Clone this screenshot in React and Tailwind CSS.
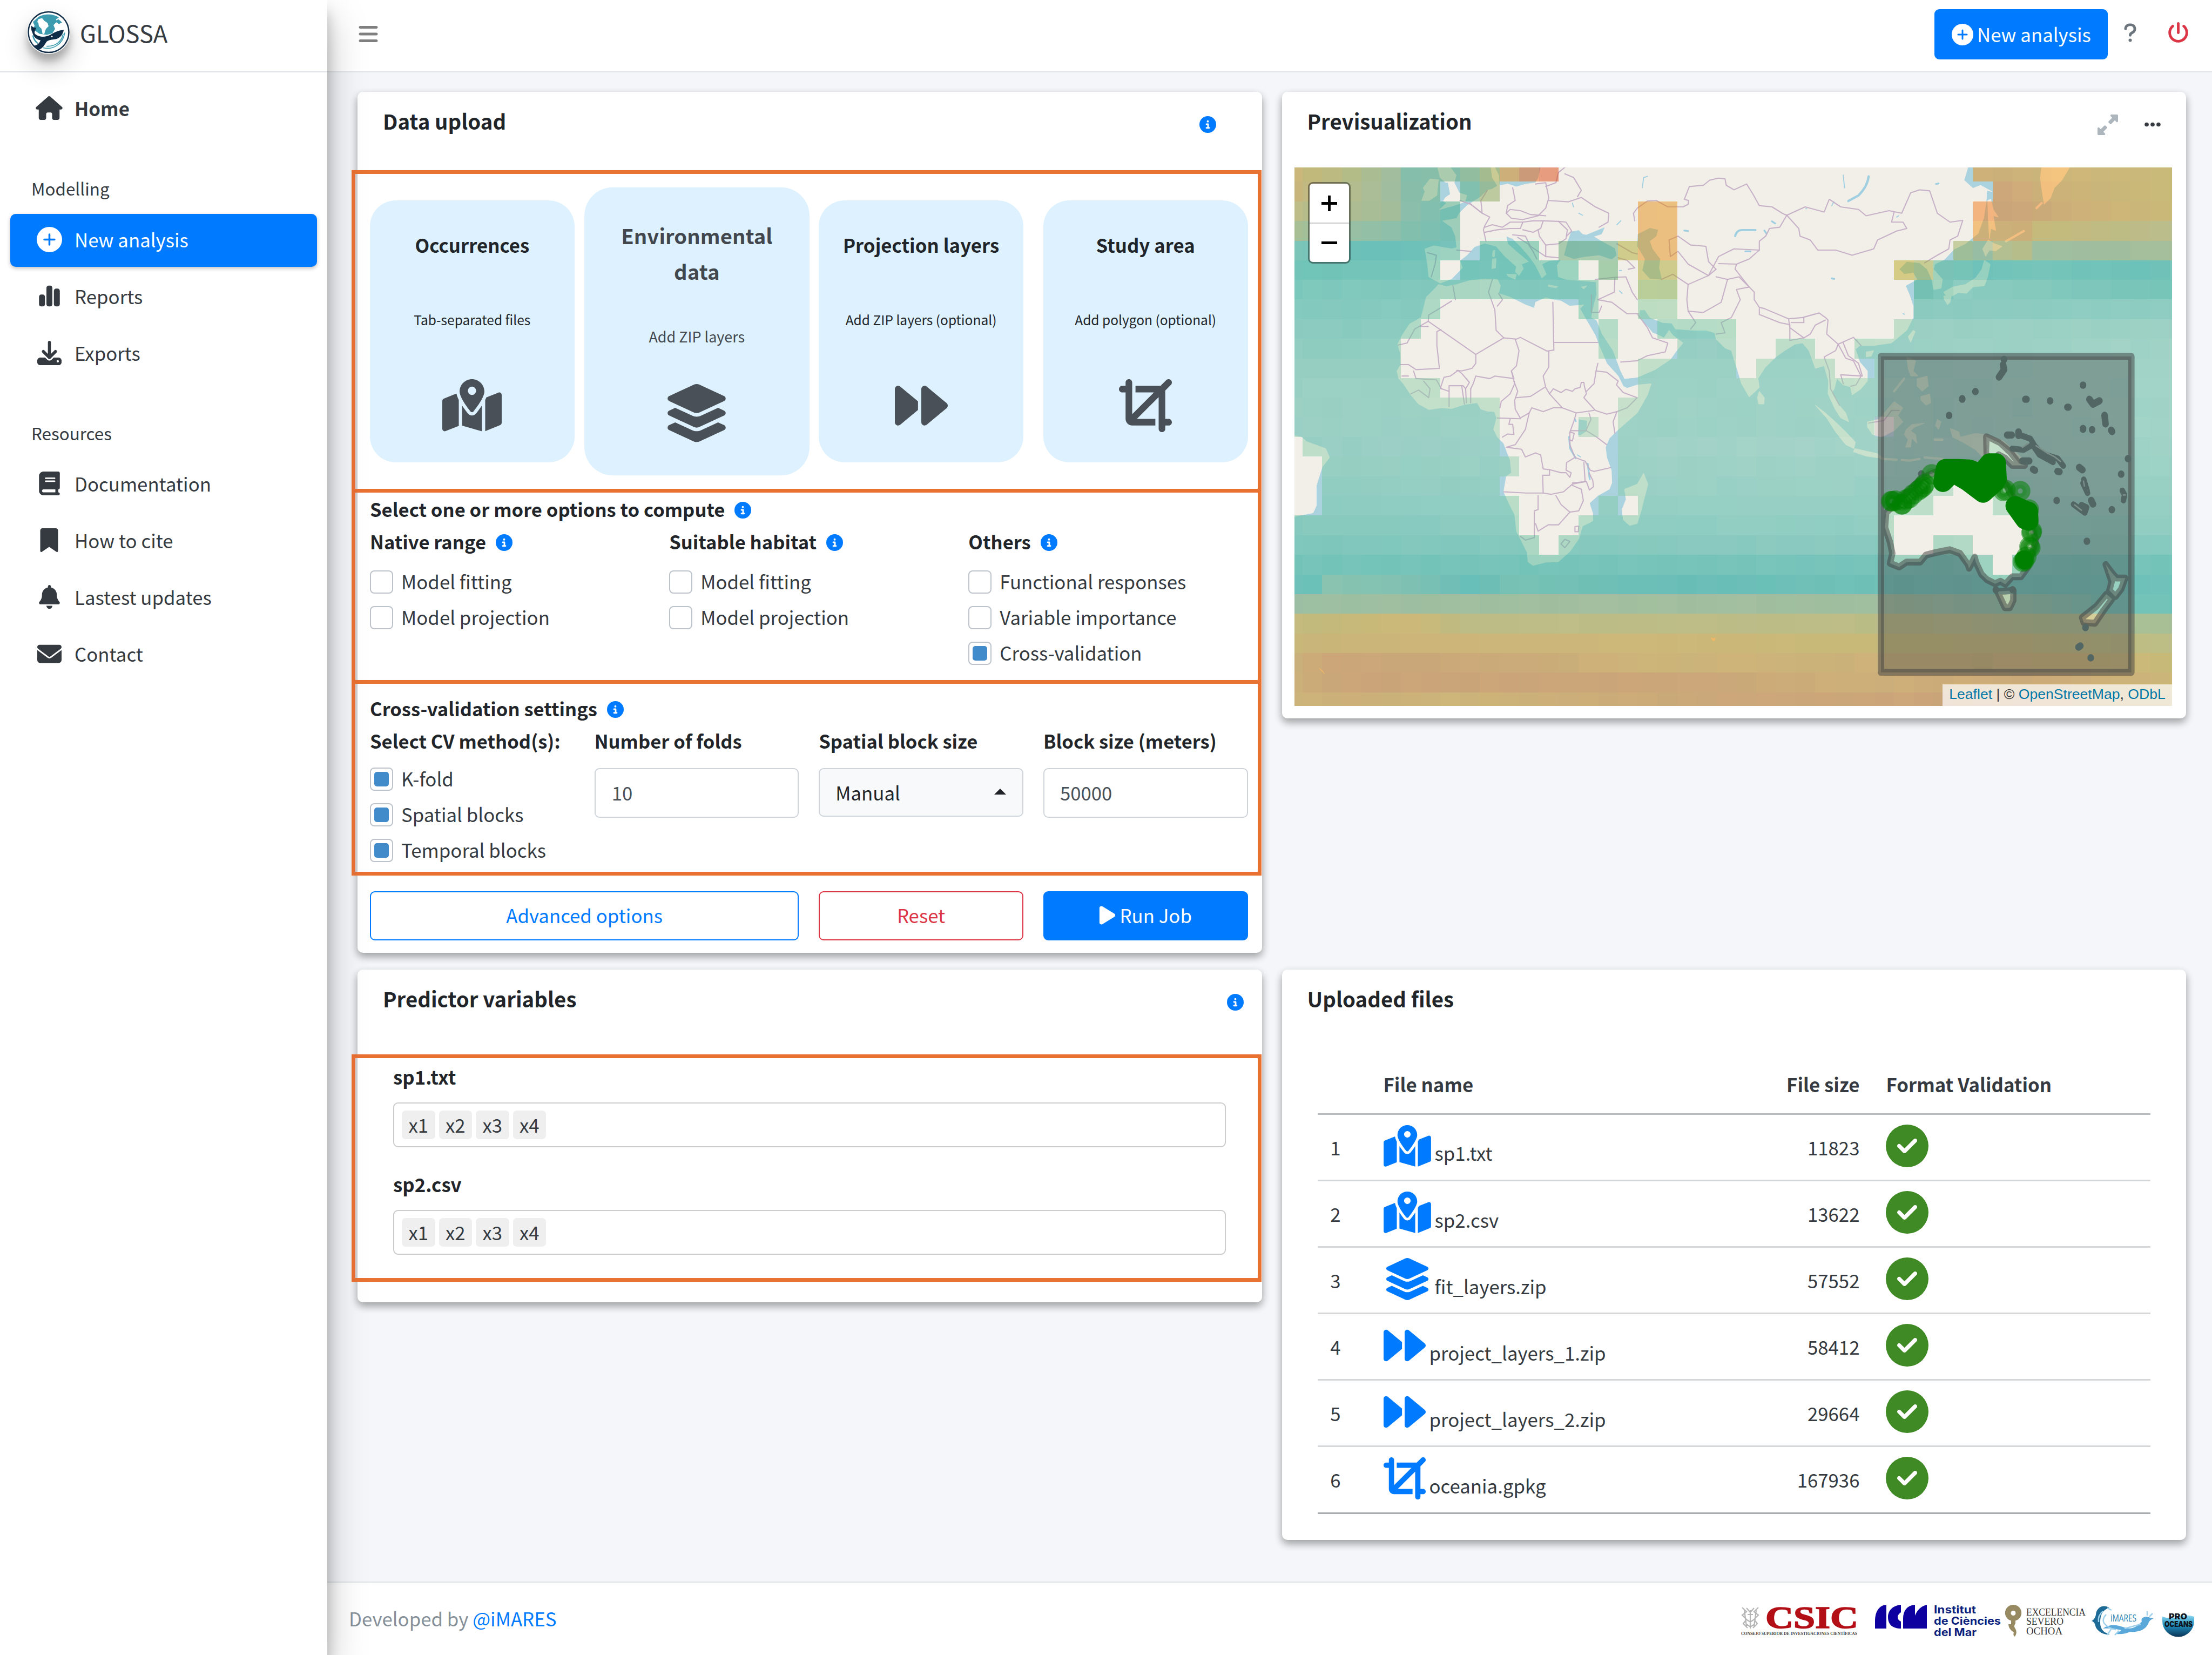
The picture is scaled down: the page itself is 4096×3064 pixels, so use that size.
import React from "react";
import {
  FaHouse, FaChartSimple, FaDownload, FaBook, FaBookmark, FaBell, FaEnvelope,
  FaCircleInfo, FaMapLocationDot, FaLayerGroup, FaForward, FaCrop, FaPlay,
  FaQuestion, FaPowerOff, FaCircleCheck, FaUpRightAndDownLeftFromCenter, FaEllipsis, FaBars,
} from "react-icons/fa6";

const CARD = "bg-white rounded-[10px] shadow-[0_7px_15px_rgba(0,0,0,0.16),0_7px_15px_rgba(0,0,0,0.23)]";

function PlusCircle({ className, plus = "#007bff" }) {
  return (
    <svg viewBox="0 0 100 100" className={className}>
      <circle cx="50" cy="50" r="50" fill="#fff" />
      <path d="M50 30v40M30 50h40" stroke={plus} strokeWidth="7.5" strokeLinecap="round" />
    </svg>
  );
}

function Info({ className = "" }) {
  return <FaCircleInfo className={"w-[31px] h-[31px] text-[#007bff] shrink-0 " + className} />;
}

/* ---------- Sidebar ---------- */

function GlossaLogo() {
  return (
    <svg viewBox="0 0 160 160" className="w-[80px] h-[81px] rounded-full shadow-[0_24px_46px_rgba(0,0,0,0.19),0_14px_14px_rgba(0,0,0,0.23)]">
      <circle cx="80" cy="80" r="80" fill="#fff" />
      <circle cx="80" cy="80" r="75" fill="#fff" stroke="#14304a" strokeWidth="5" />
      <path d="M42 24C60 12 98 10 118 26l-10 6 2 10-12 12 6 14-10 16-20 6-28-4-14-10-10-4 6-16-6-14z" fill="#3d9bb0" />
      <path d="M38 42l4-10 14-4 8 10 12 8 4 12-10 10-6 18-6 2-4-20-10-10-2-12z" fill="#fff" />
      <path d="M104 40l12-8 14 12-12 6z" fill="#3d9bb0" />
      <path d="M16 56c6 6 12 8 18 8l-4 10c-4 8-2 12 4 16 16 10 36 8 52 0 16-10 34-18 50-18-2 14-12 30-30 34-14 2-26 2-34 10-6 10-14 24-26 28-10 0-16-6-20-14 10 0 20-8 24-20-14-2-26-12-30-28-4-8-6-16-4-26z" fill="#0f2b45" />
      <path d="M134 76c-4 26-24 36-46 38-12 4-16 8-20 14 26 6 62-10 66-52z" fill="#fff" />
      <path d="M60 138c34 8 72-10 80-56M72 132c30 2 56-14 62-46" fill="none" stroke="#3d9bb0" strokeWidth="3.5" />
      <circle cx="92" cy="96" r="3" fill="#fff" />
      <path d="M22 92c2 14 8 22 18 30" fill="none" stroke="#3d9bb0" strokeWidth="5" />
    </svg>
  );
}

function NavItem({ icon: Icon, label, iconClass, className = "", bold }) {
  return (
    <div className={"h-[98px] mx-[19px] flex items-center rounded-[10px] " + className}>
      <div className="ml-[46px] w-[52px] flex justify-center shrink-0 -mt-[4px]">
        <Icon className={iconClass} />
      </div>
      <span className={"ml-[21px] -mt-[3px] whitespace-nowrap " + (bold ? "font-bold" : "")}>{label}</span>
    </div>
  );
}

function Sidebar() {
  return (
    <aside className="w-[606px] h-full shrink-0 bg-white relative z-20 text-[#343a40] shadow-[0_34px_68px_rgba(0,0,0,0.25),0_24px_24px_rgba(0,0,0,0.22)]">
      <div className="h-[134px] border-b-[2px] border-[#dee2e6] flex items-start">
        <div className="ml-[50px] mt-[19px]"><GlossaLogo /></div>
        <span className="ml-[18px] mt-[31px] text-[43.5px] leading-[60px] text-[#343a40]">GLOSSA</span>
      </div>
      <nav className="pt-[19px]">
        <NavItem icon={FaHouse} label="Home" bold iconClass="w-[50px] h-[44px]" />
        <div className="h-[145px] pl-[58px] flex items-end pb-[17px]">
          <span className="text-[31.4px] leading-[60px]">Modelling</span>
        </div>
        <NavItem icon={PlusCircle} label="New analysis" iconClass="w-[47px] h-[47px]" className="bg-[#007bff] text-white shadow-[0_3px_7px_rgba(0,0,0,0.24)]" />
        <div className="pt-[7px] flex flex-col gap-[7px]">
          <NavItem icon={FaChartSimple} label="Reports" iconClass="w-[39px] h-[44px]" />
          <NavItem icon={FaDownload} label="Exports" iconClass="w-[45px] h-[45px]" />
        </div>
        <div className="h-[144px] pl-[58px] flex items-end pb-[16px]">
          <span className="text-[31.4px] leading-[60px]">Resources</span>
        </div>
        <div className="flex flex-col gap-[7px]">
          <NavItem icon={FaBook} label="Documentation" iconClass="w-[39px] h-[44px]" />
          <NavItem icon={FaBookmark} label="How to cite" iconClass="w-[34px] h-[44px]" />
          <NavItem icon={FaBell} label="Lastest updates" iconClass="w-[39px] h-[44px]" />
          <NavItem icon={FaEnvelope} label="Contact" iconClass="w-[45px] h-[45px]" />
        </div>
      </nav>
    </aside>
  );
}

/* ---------- Top bar ---------- */

function TopBar() {
  return (
    <header className="h-[134px] shrink-0 bg-white border-b-[2px] border-[#dee2e6] flex items-start">
      <FaBars className="ml-[57px] mt-[43px] w-[38px] h-[40px] text-[#7f7f7f]" />
      <div className="ml-auto mt-[17px] w-[321px] h-[93px] rounded-[9px] bg-[#007bff] text-white flex items-center">
        <PlusCircle className="w-[40px] h-[40px] ml-[32px]" />
        <span className="ml-[7px] whitespace-nowrap">New analysis</span>
      </div>
      <FaQuestion className="ml-[29px] mt-[41px] w-[25px] h-[39px] text-[#6c757d]" />
      <FaPowerOff className="ml-[57px] mr-[43px] mt-[41px] w-[39px] h-[39px] text-[#dc3545]" />
    </header>
  );
}

/* ---------- Data upload ---------- */

function UploadTile({ title, sub, children, hovered }) {
  return (
    <div className={"h-[485px] rounded-[48px] bg-[#def1ff] flex flex-col items-center text-center pt-[52px] pb-[57px] " + (hovered ? "scale-110 text-[#41474d]" : "text-[#212529]")}>
      <div className={"font-bold px-[40px] " + (hovered ? "leading-[59.5px]" : "leading-[60px]")}>{title}</div>
      <div className="flex-1 flex items-center text-[24.5px]">{sub}</div>
      <div className="h-[97px] flex items-center text-[#495057]">{children}</div>
    </div>
  );
}

function Check({ label, on }) {
  return (
    <div className="h-[66px] flex items-center">
      <div className="w-[43px] h-[43px] rounded-[8px] border-[2.5px] border-[#bcc3ca] bg-white flex items-center justify-center shrink-0">
        {on && <div className="w-[27px] h-[27px] rounded-[5px] bg-[#428bca]" />}
      </div>
      <span className="ml-[15px] -mt-[2px] whitespace-nowrap text-[#343a40]">{label}</span>
    </div>
  );
}

function Label({ children, info }) {
  return (
    <div className="h-[60px] flex items-center font-bold text-[34.6px] whitespace-nowrap">
      {children}
      {info && <Info className="ml-[18px] mt-[3px]" />}
    </div>
  );
}

const FRAME = "-ml-[11px] mr-[1px] border-[7px] border-[#e97132] pl-[27px] pr-[18px]";

function DataUpload() {
  return (
    <section className={CARD + " h-[1594px]"}>
      <div className="h-[145px] pt-[23px] pl-[47px] pr-[85px] flex justify-between items-start">
        <h2 className="text-[38.4px] leading-[60px] font-bold">Data upload</h2>
        <Info className="mt-[22px]" />
      </div>
      <div className={FRAME + " h-[597px] pt-[49px]"}>
        <div className="grid grid-cols-4 gap-[37px]">
          <UploadTile title="Occurrences" sub="Tab-separated files"><FaMapLocationDot className="w-[110px] h-[98px]" /></UploadTile>
          <UploadTile title="Environmental data" sub="Add ZIP layers" hovered><FaLayerGroup className="w-[110px] h-[98px]" /></UploadTile>
          <UploadTile title="Projection layers" sub="Add ZIP layers (optional)"><FaForward className="w-[98px] h-[98px]" /></UploadTile>
          <UploadTile title="Study area" sub="Add polygon (optional)"><FaCrop className="w-[98px] h-[98px]" /></UploadTile>
        </div>
      </div>
      <div className={FRAME + " -mt-[7px] h-[361px] pt-[1px]"}>
        <Label info>Select one or more options to compute</Label>
        <div className="grid grid-cols-3 gap-[37px]">
          <div>
            <Label info>Native range</Label>
            <div className="mt-[11px]"><Check label="Model fitting" /><Check label="Model projection" /></div>
          </div>
          <div>
            <Label info>Suitable habitat</Label>
            <div className="mt-[11px]"><Check label="Model fitting" /><Check label="Model projection" /></div>
          </div>
          <div>
            <Label info>Others</Label>
            <div className="mt-[11px]"><Check label="Functional responses" /><Check label="Variable importance" /><Check label="Cross-validation" on /></div>
          </div>
        </div>
      </div>
      <div className={FRAME + " -mt-[7px] h-[362px] pt-[16px]"}>
        <Label info>Cross-validation settings</Label>
        <div className="grid grid-cols-4 gap-[37px]">
          <div>
            <Label>Select CV method(s):</Label>
            <div className="mt-[7px]"><Check label="K-fold" on /><Check label="Spatial blocks" on /><Check label="Temporal blocks" on /></div>
          </div>
          <div>
            <Label>Number of folds</Label>
            <div className="mt-[20px] h-[92px] border-[2.5px] border-[#ced4da] rounded-[9px] pl-[30px] pb-[2px] flex items-center text-[#495057]">10</div>
          </div>
          <div>
            <Label>Spatial block size</Label>
            <div className="mt-[20px] h-[90px] border-[2.5px] border-[#ced4da] bg-[#f8f9fa] rounded-[9px] pl-[29px] pr-[30px] flex items-center justify-between">
              Manual
              <div className="w-0 h-0 mt-[-4px] border-x-[11px] border-x-transparent border-b-[11px] border-b-[#212529]" />
            </div>
          </div>
          <div>
            <Label>Block size (meters)</Label>
            <div className="mt-[20px] h-[92px] border-[2.5px] border-[#ced4da] rounded-[9px] pl-[29px] pb-[2px] flex items-center text-[#495057]">50000</div>
          </div>
        </div>
      </div>
      <div className="mt-[29px] pl-[23px] pr-[26px] grid grid-cols-4 gap-[37px]">
        <div className="col-span-2 h-[91px] border-[2.5px] border-[#007bff] text-[#007bff] rounded-[9px] pb-[3px] flex items-center justify-center">Advanced options</div>
        <div className="h-[91px] border-[2.5px] border-[#dc3545] text-[#dc3545] rounded-[9px] pb-[3px] flex items-center justify-center">Reset</div>
        <div className="h-[91px] bg-[#007bff] text-white rounded-[9px] pb-[2px] flex items-center justify-center"><FaPlay className="w-[31px] h-[39px] mr-[7px] -mt-[1px]" />Run Job</div>
      </div>
    </section>
  );
}

/* ---------- Map ---------- */

// Suitability values, one entry per raster row: [column, sea colour] stops.
const ROWS = {
  "-1": [[-6, "c9b777"], [-3, "b5bc88"], [-1, "a0bd9d"], [0, "86bfab"], [2, "85bdaa"], [3, "93bda0"], [4, "a5bc90"], [5, "ccb070"], [6, "c99a76"], [7, "c08e74"], [29, "cdb174"], [33, "cdb672"], [39, "c9bb79"]],
  0: [[-6, "c9b67c"], [-3, "b4bd90"], [-1, "a0be9f"], [0, "8abfab"], [3, "80bfae"], [4, "98bc9c"], [30, "cda773"], [32, "cdb172"], [39, "c8bb7b"]],
  1: [[-6, "bebd87"], [-1, "a3bd9b"], [0, "8bbfac"], [2, "78bfb3"], [12, "c4b170"], [13, "c4b170"], [29, "cba577"], [31, "cca877"], [34, "cdb272"], [39, "cbbb7a"]],
  2: [[-6, "a8bf97"], [-1, "8fbfac"], [0, "84c0ae"], [2, "77bfb5"], [12, "c4b170"], [13, "c4b170"], [29, "cbb270"], [31, "ccaf72"], [32, "c5ba7c"], [39, "babe8e"]],
  3: [[-6, "7dc6b8"], [-3, "6cc1b9"], [-1, "6cc2ba"], [2, "76c3bb"], [6, "75c4b8"], [8, "84bca8"], [10, "80bdac"], [11, "a8bd86"], [12, "c4b170"], [13, "c4b170"], [28, "a0bf9a"], [29, "9abfa5"], [30, "b2be91"], [31, "b5bd8c"], [32, "9fbfa2"], [39, "a5bf9c"]],
  4: [[-6, "72c4b9"], [0, "78c5bb"], [9, "75c5ba"], [10, "82c0a6"], [12, "a9bd88"], [13, "a9bd88"], [25, "aebc80"], [26, "9fbd90"], [27, "7cc3b7"], [29, "6fc2ba"], [31, "78c5ba"], [37, "6ec2ba"], [39, "78c5bb"]],
  5: [[-6, "7cc8bc"], [0, "83c8bd"], [10, "84c8bd"], [12, "93bf95"], [13, "93bf95"], [26, "75c2b5"], [28, "8dccc0"], [33, "82c8bd"], [39, "76c4b9"]],
  6: [[-6, "85cabf"], [10, "88cabf"], [12, "96cebe"], [26, "8ccbc0"], [39, "8fcdc2"]],
  7: [[-6, "8bcbc0"], [12, "8ccdc1"], [26, "9bd0c4"], [39, "9cd1c5"]],
  8: [[-6, "90cdc1"], [20, "98cfc5"], [39, "a2d3c7"]],
  9: [[-6, "96cec2"], [39, "a2d4c8"]],
  10: [[-6, "9ad0c4"], [39, "a2d4c8"]],
  11: [[-6, "9bd0c4"], [39, "a2d4c8"]],
  12: [[-6, "9bd0c5"], [39, "a2d4c8"]],
  13: [[-6, "98cfc5"], [18, "a4d3c9"], [39, "a0d3c7"]],
  14: [[-6, "96cfc3"], [18, "a0d2c7"], [39, "9cd2c6"]],
  15: [[-6, "92cdc2"], [18, "9cd1c6"], [39, "9ad1c5"]],
  16: [[-6, "8dccc1"], [18, "98d0c5"], [39, "95cfc3"]],
  17: [[-6, "88cabf"], [18, "92cec3"], [39, "90cdc1"]],
  18: [[-6, "80c7bd"], [18, "8bcac0"], [39, "88cabf"]],
  19: [[-6, "76c4ba"], [18, "78c4bb"], [39, "76c4ba"]],
  20: [[-6, "6dc1b8"], [-5, "6dc1b8"], [-4, "8ac3b0"], [0, "80c2b3"], [2, "72bfb7"], [3, "68beb8"], [5, "78c2b5"], [10, "70c0b7"], [14, "6abfb8"], [22, "70c1b8"], [39, "70c2ba"]],
  21: [[-6, "9dbfa3"], [10, "a3bf9f"], [24, "a0bfa0"], [32, "8dc2ad"], [35, "78c4b8"], [39, "70c2ba"]],
  22: [[-6, "c3bb80"], [0, "cbb975"], [3, "bebd88"], [26, "bcbd88"], [39, "a8c099"]],
  23: [[-6, "c9b676"], [0, "cdb575"], [12, "cdb874"], [30, "c5bb7c"], [39, "bdbe88"]],
  24: [[-6, "cbb078"], [-4, "cba67a"], [6, "cbac76"], [12, "cdb572"], [26, "ccb274"], [34, "cdb670"], [39, "c5bb7a"]],
  25: [[-6, "ccb076"], [-3, "cba57a"], [14, "cba779"], [22, "cdb074"], [32, "ccab77"], [39, "cdb870"]],
  26: [[-6, "cdb474"], [-3, "cbaf76"], [2, "cdb572"], [16, "cca877"], [30, "cba579"], [39, "cdb472"]],
};

// Column ranges without a value.
const EMPTY = {
  "-1": [[8, 29]], 0: [[2, 3], [5, 30]], 1: [[3, 12], [14, 29]], 2: [[3, 12], [14, 29]],
  3: [[3, 4], [7, 8], [14, 28]], 4: [[2, 3], [9, 10], [11, 12], [14, 25]], 5: [[10, 12], [14, 26]],
  6: [[2, 9], [10, 12], [14, 26]], 7: [[1, 10], [11, 13], [17, 25]], 8: [[0, 10], [11, 14], [17, 19], [21, 23]],
  9: [[0, 12], [17, 18], [22, 24]], 10: [[2, 12]], 11: [[5, 11]], 12: [[5, 9], [10, 11], [24, 25]],
  13: [[-6, -5], [5, 11]], 14: [[-6, -4], [6, 11]], 15: [[-6, -4], [5, 11], [28, 30]],
  16: [[-6, -4], [6, 10], [11, 12], [27, 30]], 17: [[6, 9], [25, 32]], 18: [[7, 8], [25, 27], [29, 32]], 19: [[30, 31]],
};

const rgb = (h) => [0, 2, 4].map((i) => parseInt(h.slice(i, i + 2), 16));
const WATER = [170, 211, 223];
const ALPHA = 0.45;

function rasterCells() {
  const cells = [];
  for (let j = -1; j <= 26; j++) {
    const stops = ROWS[j];
    const skip = EMPTY[j] || [];
    for (let k = -6; k <= 39; k++) {
      if (skip.some(([a, b]) => k >= a && k < b)) continue;
      let i = 0;
      while (i < stops.length - 2 && stops[i + 1][0] <= k) i++;
      const [k0, c0] = stops[i];
      const [k1, c1] = stops[i + 1];
      const t = Math.max(0, Math.min(1, (k - k0) / (k1 - k0)));
      const a = rgb(c0), b = rgb(c1);
      const n = ((((k * 37 + j * 61 + k * j * 13) % 7) + 7) % 7 - 3) * 0.6;
      const col = a.map((v, q) => {
        const sea = v + (b[q] - v) * t + (q === 0 ? n : n * 0.3);
        return Math.max(0, Math.min(255, Math.round((sea - (1 - ALPHA) * WATER[q]) / ALPHA)));
      });
      const x = Math.round(71 + 77.55 * k), x2 = Math.round(71 + 77.55 * (k + 1));
      const y = j < 0 ? 0 : Math.round(56 + 77.2 * j), y2 = Math.round(56 + 77.2 * (j + 1));
      cells.push(<rect key={j + "_" + k} x={x} y={y} width={x2 - x} height={y2 - y} fill={"rgb(" + col.join(",") + ")"} />);
    }
  }
  return cells;
}

const LAND = [
  // Africa
  "218,460 205,475 170,510 158,560 150,590 105,615 75,660 58,695 68,730 70,775 55,800 62,830 80,850 110,895 140,930 180,952 230,945 270,948 320,932 370,925 385,950 410,958 438,960 447,985 435,1030 450,1060 475,1085 490,1125 500,1150 505,1200 485,1215 475,1275 495,1320 518,1365 525,1430 545,1470 568,1515 570,1550 590,1565 640,1552 690,1550 735,1510 770,1460 785,1410 825,1390 825,1360 812,1320 845,1290 890,1265 900,1240 898,1190 880,1140 875,1100 890,1065 920,1035 960,1000 1000,965 1040,895 1055,850 1000,855 960,868 945,860 925,820 880,770 850,700 835,660 800,600 775,555 790,540 735,545 700,525 670,520 640,512 600,530 595,553 560,540 530,525 500,510 455,495 462,465 450,440 400,438 340,445 290,460 250,468",
  // Eurasia
  "180,430 175,380 165,320 200,308 270,320 290,315 285,270 270,235 235,210 290,200 300,180 330,150 385,115 410,90 430,85 450,72 430,40 425,0 440,0 455,30 458,72 490,65 525,76 560,66 600,60 612,40 620,0 2300,0 2285,50 2320,82 2350,70 2395,95 2375,90 2372,135 2362,200 2340,260 2290,300 2245,322 2208,362 2170,380 2165,400 2200,440 2195,475 2165,480 2158,440 2140,400 2110,375 2060,370 2030,400 2050,420 2085,415 2100,440 2055,465 2070,500 2085,545 2085,590 2060,640 2000,690 1930,700 1875,700 1858,715 1875,765 1905,800 1905,840 1880,870 1845,895 1838,862 1810,855 1785,830 1775,870 1765,885 1790,930 1820,965 1832,1000 1800,985 1778,950 1750,890 1752,840 1735,780 1700,790 1690,760 1675,720 1650,690 1620,695 1580,720 1545,745 1500,790 1475,830 1480,865 1465,880 1440,902 1410,850 1395,800 1370,720 1345,710 1310,675 1305,650 1270,640 1220,640 1150,635 1135,612 1100,610 1050,590 1030,560 1010,560 1005,590 1040,625 1060,650 1085,660 1105,670 1125,640 1140,660 1180,690 1155,720 1130,755 1070,795 1000,825 950,830 935,800 905,720 862,655 840,600 820,590 825,560 840,500 838,450 780,445 720,440 690,430 685,385 700,362 655,366 625,380 642,420 625,435 600,385 575,350 540,310 510,280 485,270 490,300 530,335 572,370 545,380 552,398 535,425 520,410 525,390 480,350 445,310 400,298 360,312 330,345 303,366 312,395 270,438 225,455",
  // Great Britain, Ireland
  "215,0 265,0 288,30 280,60 300,100 330,110 322,135 285,148 222,166 250,140 232,128 265,105 258,70 225,40",
  "152,130 165,95 158,80 185,45 218,48 212,110 182,130",
  // Sardinia, Corsica, Sicily, Crete, Cyprus
  "430,360 445,358 443,395 428,398", "432,328 440,325 438,352 430,350", "487,420 525,420 520,440 492,428", "650,462 688,468 680,473 650,468", "780,470 802,465 790,478",
  // Madagascar, Sri Lanka
  "1025,1202 1042,1245 1015,1350 1000,1400 970,1408 945,1385 940,1345 956,1305 950,1265 1000,1245", "1480,880 1500,905 1498,930 1478,930 1472,905",
  // Japan, Sakhalin, Kamchatka, Taiwan, Hainan
  "2358,320 2380,285 2405,300 2435,310 2410,328 2385,325 2370,350", "2365,365 2388,380 2378,430 2365,465 2320,470 2295,495 2262,492 2240,505 2215,505 2205,490 2240,470 2290,460 2330,435 2355,400", "2205,505 2235,505 2230,530 2220,540 2208,520",
  "2378,130 2390,125 2400,165 2420,195 2400,190 2410,248 2390,240 2385,280 2380,200", "2590,0 2700,0 2670,50 2640,80 2625,120 2600,145 2590,80 2585,40",
  "2085,640 2093,645 2075,688 2065,665", "1900,725 1930,720 1920,742 1900,745",
  // Sumatra, Java, Borneo, Sulawesi, Philippines, New Guinea
  "1700,935 1740,965 1790,1010 1830,1050 1858,1080 1852,1105 1820,1090 1780,1040 1745,985", "1855,1105 1900,1115 1945,1125 1970,1145 1900,1135 1850,1118",
  "1905,1000 1950,990 1975,960 2010,920 2045,945 2025,975 2045,1000 2010,1035 1960,1060 1925,1050 1905,1020",
  "2058,1030 2080,1010 2130,1005 2090,1022 2075,1035 2095,1050 2100,1085 2080,1065 2075,1100 2055,1100 2065,1070 2050,1050",
  "2060,745 2095,760 2085,800 2105,820 2075,820 2065,790", "2115,900 2150,890 2155,925 2135,935 2115,915", "2100,830 2140,820 2145,860 2120,880 2100,860",
  "2230,1025 2265,1040 2270,1060 2330,1045 2370,1050 2440,1075 2500,1130 2540,1165 2480,1170 2430,1125 2360,1140 2330,1110 2280,1080 2240,1060", "2180,990 2195,1000 2185,1030 2172,1015",
  // South America
  "-348,1055 -320,1060 -300,1078 -225,1105 -210,1140 -239,1178 -262,1250 -262,1330 -275,1358 -348,1372",
];

const AUSTRALIA = "M245 740L300 690 400 600 500 560 600 560 690 600 686 432 740 455 790 492 830 540 855 548 800 548 770 520 740 505 760 600 790 660 860 740 905 850 870 960 838 1000 800 1000 770 1030 748 1018 725 1028 690 1012 665 990 640 940 635 920 610 965 605 950 570 905 525 890 460 902 420 912 395 940 335 940 302 960 262 945 272 905 262 860 240 800z";
const TASMANIA_NZ = "M735 1060L805 1055 805 1095 790 1125 768 1125zM1212 950L1240 985 1260 1005 1298 1005 1280 1050 1255 1080 1228 1055 1238 1020zM1215 1070L1240 1090 1200 1140 1165 1188 1115 1185 1108 1165 1170 1120z";

const BORDERS = [
  // Europe
  "303,130 345,145 390,180 420,195 400,230 395,245 405,290", "340,140 390,180 385,130 410,90", "510,80 520,130 490,150 485,180 505,200 550,205 610,190 640,160 652,120 640,60 600,65", "652,130 730,135 780,118 835,155 888,180 885,215 850,235", "640,75 680,60 690,20 715,0", "715,25 750,40 780,90 765,115", "400,235 430,225 470,235 500,215 550,215 540,240 500,240 450,245 400,255", "550,215 590,210 630,210 620,240 590,255 550,245", "630,210 690,212 725,245 720,280 690,300 640,305 615,270 610,245", "690,212 720,215 742,250 722,270", "510,265 560,270 580,310 610,330 640,350 690,355", "530,275 570,300 590,330 605,360", "640,305 640,350", "175,335 210,345 205,380 190,430", "290,325 345,330", "485,180 500,165 540,170 580,185 640,190",
  // Africa
  "270,525 230,550 180,580 178,605 365,735 475,670 445,640 440,560 415,490 430,440", "275,465 285,520", "455,495 470,520 450,545", "178,605 125,635 95,690 60,698", "148,625 178,625", "228,638 212,645 212,700 222,790 130,795 100,775 70,775", "365,735 365,770 350,790 310,800 290,798", "475,670 525,675 540,668 645,722 672,718 668,530", "520,675 535,720 525,780 505,800 515,830 440,820 420,830 365,820 355,850 345,870", "672,688 845,688", "652,722 652,785 630,820 640,865 655,890 705,945", "655,890 670,870 700,885 720,872 745,880 755,870 775,865 780,845 790,845 792,860 800,890 790,905 835,955 880,970 920,960", "845,770 838,800 830,850 800,880", "838,800 880,805 925,840 918,855 945,885 1000,905 960,945 920,960", "525,905 580,900 635,865", "505,800 518,850 500,890 465,920 460,945", "515,840 530,880 518,915 520,950 540,985 575,965 585,945 630,960 670,945 705,945 760,965 750,1000 735,1040 735,1090 755,1140 795,1155", "450,985 540,988", "575,965 560,1030 540,1060 520,1090 485,1100 545,1108 560,1138 600,1122 620,1130 630,1185 655,1188 700,1200 720,1200 735,1218 740,1200 720,1190 722,1160 755,1140", "500,990 495,1010 510,1010 515,1050 490,1048 470,1060", "655,1190 655,1210 628,1210 630,1280 560,1280 475,1275", "630,1280 660,1285 710,1275 745,1245 795,1235 790,1160", "610,1290 610,1345 595,1350 595,1455 560,1465 540,1450", "600,1400 610,1430 650,1405 690,1405 735,1355 770,1350 788,1310 780,1265 745,1250", "680,1290 700,1325 735,1355", "760,965 830,955", "740,1035 800,1035 840,1060 880,1090", "810,965 818,990 800,1030", "920,960 905,1000 912,1045", "735,1040 752,1045 745,1075 732,1070", "795,1155 815,1190 830,1195 895,1180", "745,1240 800,1235 812,1268 828,1255 825,1230 810,1200", "230,870 260,880 260,940", "225,870 240,825 265,820 295,798 310,810 340,845 325,870 315,858 260,858 260,880", "310,860 320,930", "325,870 328,925", "345,870 345,925", "120,800 130,830 210,835 230,870", "110,890 140,875 180,905 185,870 160,840", "755,1412 770,1410 768,1432 755,1432 755,1412", "700,1480 715,1462 735,1470 715,1495 700,1480", "75,820 100,820",
  // Middle East, Central Asia
  "835,440 910,432 955,430 980,490 1000,520", "845,520 910,490 912,435", "845,520 900,530 960,575 1005,575", "820,500 820,570 850,570 860,545", "920,300 980,335 1000,340", "925,355 960,365 990,395 965,400", "1000,575 1040,630 1060,670 1120,690 1110,725 1040,740 1000,760 935,765", "990,210 985,180 1000,160 1040,132 1075,130 1120,155 1180,155 1200,145 1202,130 1185,125 1205,75 1260,70 1285,50 1320,42 1345,45 1350,70 1380,88 1430,65 1455,105 1480,150 1530,155 1570,180 1588,188", "1160,270 1125,285 1130,350 1160,330 1200,380 1280,425 1310,400 1280,370 1270,310 1210,305 1160,270", "1095,440 1140,420 1200,460 1280,425", "1200,460 1195,520 1200,565 1230,610 1210,635", "1200,565 1260,570 1330,530 1355,440 1310,430", "1355,440 1400,430 1440,470 1390,480 1405,520 1370,590 1330,610 1345,650 1310,655", "1280,425 1320,350 1380,320 1480,325 1440,360 1390,380 1320,378", "1390,380 1385,400 1440,470 1460,490 1460,520 1480,550", "1588,188 1560,235 1520,240 1505,270 1480,290 1480,325",
  // China, Mongolia, South-East Asia
  "1588,188 1660,155 1735,175 1755,125 1800,155 1870,165 1900,190 1990,170 2040,180 2075,100 2110,88 2150,92 2180,180 2230,215 2280,208 2260,270 2230,285 2225,320 2180,345 2130,375", "1588,188 1635,240 1640,270 1680,285 1710,325 1780,325 1845,345 1930,320 1945,285 2020,250 2060,240 2045,215 2000,215 2010,175", "1480,550 1500,555 1595,595 1650,590 1715,572 1740,590 1750,600 1745,655 1790,695 1850,668 1880,700", "1480,555 1480,578 1560,610 1600,618 1600,680 1655,670 1600,630 1595,595", "1605,610 1655,610 1655,590", "1655,670 1680,655 1700,620 1740,600", "1790,695 1780,720 1735,745 1755,800 1760,870 1795,935", "1790,695 1820,750 1850,760 1880,820 1860,855 1840,860", "1810,690 1830,740 1870,770 1885,820 1800,815 1810,850", "1910,1005 1970,995 2000,955 2030,955",
];

const LAKES = [
  "712,345 725,295 740,252 770,247 785,262 800,265 872,235 860,262 830,272 860,290 912,318 918,345 900,362 850,345 790,352 750,360",
  "1002,262 1050,238 1082,245 1075,270 1050,290 1060,320 1090,360 1086,395 1097,440 1050,438 1020,405 1030,360 1000,310",
];

function WorldMap() {
  return (
    <svg viewBox="-348 0 3452 2117" preserveAspectRatio="none" className="w-full h-full block">
      <rect x="-348" y="0" width="3452" height="2117" fill="#aad3df" />
      <g fill="#f2efe9" stroke="#f2efe9" strokeWidth="2" strokeLinejoin="round">
        {LAND.map((p, i) => <polygon key={i} points={p} />)}
        <g transform="translate(1760 640) scale(.8929 .9694)">
          <path d={AUSTRALIA} />
          <path d={TASMANIA_NZ} />
        </g>
        <path d="M2040 1150l30 2 40-6M2170 1070h30M2130 1140l70 6M1960 1145l60 4M2010 880l40-50M2570 160l20-20M2450 290l70-40" fill="none" strokeWidth="9" strokeLinecap="round" />
      </g>
      <g fill="#aad3df">
        {LAKES.map((p, i) => <polygon key={i} points={p} />)}
        <path d="M226 60h30l2 30-20 40h-12zM770 990l32 6v40l-25 16h-10z" />
      </g>
      <g fill="none" stroke="#9fcfe0" strokeLinecap="round" strokeLinejoin="round">
        <path d="M1910 35q-5 40-40 75l-40 22" strokeWidth="9" />
        <path d="M1385 270q5-25 30-24l50 0" strokeWidth="8" />
        <path d="M732 1060l4 45 22 38M805 1165l8 60" strokeWidth="7" />
        <path d="M1185 248l15 2M1425 330h20M1765 436l10 2M1500 248l8 12M1530 212l12 8M2175 65l10-2M755 990l3 8" strokeWidth="7" />
        <path d="M1020 80l5-40 15-5M1765 150l8-15M1810 30l5 50M920 225l15-15M770 180l15 8M745 140l4 15M765 1130l12 8M2020 195l8-5M1663 162h3M2045 575l5 2M930 405h8M930 485l10 10" strokeWidth="4" />
      </g>
      <g fill="none" stroke="#c4aec6" strokeOpacity="0.95" strokeWidth="4.5" strokeLinejoin="round" strokeLinecap="round">
        {BORDERS.map((p, i) => <polyline key={i} points={p} />)}
      </g>
      <g opacity={ALPHA} shapeRendering="crispEdges">{rasterCells()}</g>
      <path d="M1290 1848l8 4 9-2-2 8-4 4-8-6zM-252 1968l14 10 8 14" fill="#efb765" stroke="#efb765" strokeWidth="2" />

      {/* study area */}
      <g transform="translate(1760 640) scale(.8929 .9694)">
        <path fillRule="evenodd" fill="#434343" fillOpacity="0.37" stroke="#434343" strokeOpacity="0.52" strokeWidth="28" strokeLinejoin="round"
          d={"M222 106H1325V1387H222z " + AUSTRALIA + TASMANIA_NZ} />
        <path fill="none" stroke="#526664" strokeWidth="24" strokeLinecap="round" strokeLinejoin="round"
          d="M835 425L880 440 900 470 930 500 1000 520 1025 550M980 535L920 505 890 465 850 485 800 480M1115 605L1130 650M1112 620l20 40M1070 706L1120 740 1128 718 1105 708M1285 650L1295 668 1290 690M1310 655" />
        <path fill="none" stroke="#7b8f88" strokeWidth="6" strokeLinecap="round" d="M905 468l50 30 30 14 28 20M1075 708l30 22M845 475l25-15M1114 612l4 20M1290 668h8" />
        <path fill="none" stroke="#526664" strokeWidth="29" strokeLinecap="round" strokeLinejoin="round"
          d="M764 118v1M760 140l4 20-22 30M580 277v3M638 248v1M522 345v1M858 280h5M967 286v1M1043 312h5M1112 222v1M1140 280l16 20 28-14M1207 345l4 35M1236 405l4 6M1112 398v4M1152 403v1M778 425h20M828 412v15M892 564l8 4M845 530h30M1095 556l14 10M1000 572l8 2M1148 690l8 15M1310 520v1M1280 583v1M996 690v1M1239 727v1M1129 855v1M1092 1285l8-5M1146 1328v1M400 582v1M1123 1205v1M728 1052v1M802 1052v1" />
        <path d="M700 450l40 18 30 26-38-6-34 10z" fill="#c5e0cb" />
        <rect x="195" y="350" width="84" height="80" fill="#b09a9e" fillOpacity="0.25" />
      </g>

      {/* occurrences */}
      <g fill="#008000" stroke="#008000" strokeLinejoin="round" strokeLinecap="round">
        <path strokeWidth="76" d="M2212 1184L2262 1184 2306 1186 2350 1205 2385 1162 2412 1162 2415 1225 2405 1240 2360 1280 2300 1235 2240 1200 2202 1238z" />
        <path strokeWidth="76" d="M2486 1330L2530 1350 2538 1352 2540 1390 2525 1385z" />
        <path strokeWidth="70" d="M2522 1545l-2 -4" />
      </g>
      <g fill="#008000" fillOpacity="0.2" stroke="#008000" strokeOpacity="0.52" strokeWidth="30">
        {[[2003, 1312], [2015, 1310], [1998, 1312], [2040, 1325], [2058, 1305], [2070, 1300], [2085, 1285], [2105, 1270], [2115, 1262], [2125, 1255], [2130, 1245], [2158, 1206], [2042, 1324], [2440, 1272], [2448, 1268], [2506, 1272], [2540, 1345], [2550, 1436], [2552, 1430], [2546, 1495], [2542, 1490], [2530, 1530], [2522, 1545], [2516, 1550]].map(([x, y], i) => <circle key={i} cx={x} cy={y} r="25" />)}
      </g>
    </svg>
  );
}

function Previsualization() {
  return (
    <section className={CARD + " h-[1160px] pl-[23px] pr-[26px] text-black"}>
      <div className="h-[140px] pt-[23px] pl-[24px] pr-[18px] flex items-start text-[#212529]">
        <h2 className="text-[38.4px] leading-[60px] font-bold">Previsualization</h2>
        <FaUpRightAndDownLeftFromCenter className="ml-auto mt-[19px] w-[38px] h-[38px] text-[#adb5bd]" />
        <FaEllipsis className="ml-[46px] mt-[20px] w-[36px] h-[35px] text-[#343a40]" />
      </div>
      <div className="relative h-[997px] overflow-hidden">
        <WorldMap />
        <div className="absolute left-[25px] top-[27px] w-[79px] h-[151px] rounded-[9px] border-[3px] border-black/40 bg-white bg-clip-padding flex flex-col overflow-hidden">
          <div className="h-[74px] border-b-[2.5px] border-[#ccc] flex items-center justify-center">
            <svg viewBox="0 0 32 32" className="w-[31px] h-[31px]"><path d="M16 1v30M1 16h30" stroke="#000" strokeWidth="5" /></svg>
          </div>
          <div className="flex-1 flex items-center justify-center">
            <svg viewBox="0 0 32 32" className="w-[31px] h-[31px]"><path d="M1 16h30" stroke="#000" strokeWidth="5" /></svg>
          </div>
        </div>
        <div className="absolute right-0 bottom-0 h-[40px] w-[425px] bg-white/70 pb-[2px] flex items-center justify-center font-['Liberation_Sans'] text-[26.6px] text-[#333] whitespace-pre">
          <span className="text-[#0078a8]">Leaflet</span> | © <span className="text-[#0078a8]">OpenStreetMap</span>, <span className="text-[#0078a8]">ODbL</span>
        </div>
      </div>
    </section>
  );
}

/* ---------- Predictor variables ---------- */

function Chips() {
  return (
    <div className="mt-[18px] h-[83px] border-[2.5px] border-[#ccc] rounded-[9px] pl-[14px] flex items-center gap-[7px]">
      {["x1", "x2", "x3", "x4"].map((v) => (
        <span key={v} className="w-[61.5px] h-[53px] rounded-[7px] bg-[#efefef] text-[#343a40] flex items-center justify-center">{v}</span>
      ))}
    </div>
  );
}

function Predictors() {
  return (
    <section className={CARD + " h-[616px]"}>
      <div className="h-[157px] pt-[23px] pl-[47px] pr-[34px] flex justify-between items-start">
        <h2 className="text-[38.4px] leading-[60px] font-bold">Predictor variables</h2>
        <Info className="mt-[22px]" />
      </div>
      <div className="-ml-[11px] mr-[1px] h-[421px] border-[7px] border-[#e97132] pl-[70px] pr-[59px] pt-[4px]">
        <div className="font-bold leading-[60px]">sp1.txt</div>
        <Chips />
        <div className="mt-[38px] font-bold leading-[60px]">sp2.csv</div>
        <Chips />
      </div>
    </section>
  );
}

/* ---------- Uploaded files ---------- */

const FILES = [
  [1, FaMapLocationDot, "w-[88px] h-[78px]", "sp1.txt", "11823"],
  [2, FaMapLocationDot, "w-[88px] h-[78px]", "sp2.csv", "13622"],
  [3, FaLayerGroup, "w-[88px] h-[78px]", "fit_layers.zip", "57552"],
  [4, FaForward, "w-[78px] h-[78px]", "project_layers_1.zip", "58412"],
  [5, FaForward, "w-[78px] h-[78px]", "project_layers_2.zip", "29664"],
  [6, FaCrop, "w-[78px] h-[78px]", "oceania.gpkg", "167936"],
];

function UploadedFiles() {
  const cols = "grid grid-cols-[67px_686px_251px_1fr] items-center ";
  return (
    <section className={CARD + " h-[1056px]"}>
      <div className="h-[156px] pt-[23px] pl-[47px]">
        <h2 className="text-[38.4px] leading-[60px] font-bold">Uploaded files</h2>
      </div>
      <div className="ml-[66px] w-[1542px] text-[#343a40]">
        <div className={cols + "h-[113px] border-b-[3px] border-[#b8bbbd] pt-[3px] font-bold"}>
          <span />
          <span className="pl-[55px]">File name</span>
          <span className="text-right">File size</span>
          <span className="pl-[49px]">Format Validation</span>
        </div>
        {FILES.map(([n, Icon, size, name, bytes]) => (
          <div key={n} className={cols + "h-[123.1px] " + (n === 6 ? "border-b-[3px] border-[#a8abae]" : "border-b-[3px] border-[#d5d7d9]")}>
            <span className="text-center">{n}</span>
            <span className="pl-[55px] flex items-center">
              <Icon className={size + " -mt-[5px] text-[#007bff]"} />
              <span className="ml-[7px] mt-[21px] whitespace-nowrap">{name}</span>
            </span>
            <span className="text-right">{bytes}</span>
            <FaCircleCheck className="ml-[48px] -mt-[6px] w-[79px] h-[79px] text-[#3f8a24]" />
          </div>
        ))}
      </div>
    </section>
  );
}

/* ---------- Footer ---------- */

function PartnerLogos() {
  return (
    <svg viewBox="0 0 914 133" className="w-[914px] h-[133px]">
      <defs>
        <linearGradient id="ocean" x1="0" y1="0" x2="0" y2="1">
          <stop offset="0" stopColor="#8fd8ef" /><stop offset="0.45" stopColor="#1f8fc0" /><stop offset="1" stopColor="#0a3354" />
        </linearGradient>
      </defs>
      <g fill="none" stroke="#b5b5b5" strokeWidth="2.2">
        <path d="M44 45l8 8-8 6 8 8-6 8 8 8M74 45l-8 8 8 6-8 8 6 8-8 8M52 46l7 8 7-8M54 58h10M50 66l9 6 9-6M52 76l7 5 8-5M59 50v34M48 50l4 30M70 50l-4 30" />
      </g>
      <text x="87" y="83" textLength="172" lengthAdjust="spacingAndGlyphs" fontFamily="Liberation Serif" fontWeight="bold" fontSize="58" fill="#b30f17" stroke="#b30f17" strokeWidth="1.6">CSIC</text>
      <text x="42" y="96" textLength="215" lengthAdjust="spacingAndGlyphs" fontFamily="Liberation Serif" fontWeight="bold" fontSize="8.500" fill="#444">CONSEJO SUPERIOR DE INVESTIGACIONES CIENTÍFICAS</text>
      <g fill="#0e00a0">
        <path d="M290 84V70C290 52 298 41 311 40V84z" />
        <path d="M338 40V54q-6 4-6 9t6 8V84C322 84 314 76 314 63S324 41 338 40z" />
        <path d="M342 84V66C342 50 350 41 364 40V60C368 50 376 42 386 40V84z" />
      </g>
      <g fontFamily="Inter" fontWeight="700" fontSize="20" fill="#0c1f7c">
        <text x="399" y="56" textLength="78" lengthAdjust="spacingAndGlyphs">Institut</text>
        <text x="399" y="77" textLength="124" lengthAdjust="spacingAndGlyphs">de Ciències</text>
        <text x="399" y="98" textLength="79" lengthAdjust="spacingAndGlyphs">del Mar</text>
      </g>
      <path d="M546 40a15 15 0 0 1 4 29.500v5q-4 5 0 10 4 7-1 14.500-4-2-2-8-10-6-10-15h5v-6.500A15 15 0 0 1 546 40z" fill="#978a62" />
      <circle cx="546" cy="55.500" r="4.500" fill="#fff" />
      <g fontFamily="Liberation Serif" fontSize="18.500" fill="#333">
        <text x="570" y="60" textLength="110" lengthAdjust="spacingAndGlyphs">EXCELENCIA</text>
        <text x="570" y="76.500" textLength="69" lengthAdjust="spacingAndGlyphs">SEVERO</text>
        <text x="570" y="94.500" textLength="67" lengthAdjust="spacingAndGlyphs">OCHOA</text>
      </g>
      <path d="M724 46c-10-8-24-2-25 12-1 6-4 10-8 12 6 2 6 6 8 12 6 10 16 14 26 13-14-4-18-12-18-22 0-14 4-24 17-27z" fill="#1d6a96" />
      <path d="M712 84c14-10 28-6 40-2 14 5 24-2 32-11-2-6 2-8 8-9 4 0 8 3 14 3-6 3-8 4-10 10-6 12-18 16-34 15-8 4-16 5-26 4 4-3 7-4 10-7-12-3-22-4-34-3z" fill="#5aa8da" />
      <path d="M712 52q-10 8-8 20M718 58q-8 8-4 16 8 10 22 12M728 84l-8 12M742 88l-8 8M752 84l30-8M794 52v8M804 56l-6 6M720 46l8 4" stroke="#9fd0ec" strokeWidth="2.500" fill="none" />
      <text x="726" y="71" textLength="48" lengthAdjust="spacingAndGlyphs" fontFamily="Open Sans" fontSize="18" fill="#2c7fae">iMARES</text>
      <path d="M822 62q15 5 30 0t29 0v8a29.500 29.500 0 0 1-59 0z" fill="url(#ocean)" />
      <g fontFamily="Inter" fontWeight="900" fontSize="14.500" fill="#10161c">
        <text x="834" y="67" textLength="34" lengthAdjust="spacingAndGlyphs">PRO</text>
        <text x="826" y="81" textLength="52" lengthAdjust="spacingAndGlyphs">OCEANS</text>
      </g>
    </svg>
  );
}

export default function App() {
  return (
    <div className="w-[4096px] h-[3064px] flex overflow-hidden bg-[#f4f6f9] text-[34.8px] text-[#212529] font-['Noto_Sans_CJK_SC',sans-serif]">
      <Sidebar />
      <div className="flex-1 flex flex-col min-w-0">
        <TopBar />
        <main className="flex-1 pt-[36px] pl-[56px] pr-[48px]">
          <div className="grid grid-cols-2 gap-x-[37px] gap-y-[31px] items-start">
            <DataUpload />
            <Previsualization />
            <Predictors />
            <UploadedFiles />
          </div>
        </main>
        <footer className="h-[136px] shrink-0 bg-white border-t-[2px] border-[#dee2e6] flex items-center justify-between pl-[40px]">
          <div className="text-[#869099] -mt-[2px]">Developed by <span className="text-[#007bff]">@iMARES</span></div>
          <PartnerLogos />
        </footer>
      </div>
    </div>
  );
}
